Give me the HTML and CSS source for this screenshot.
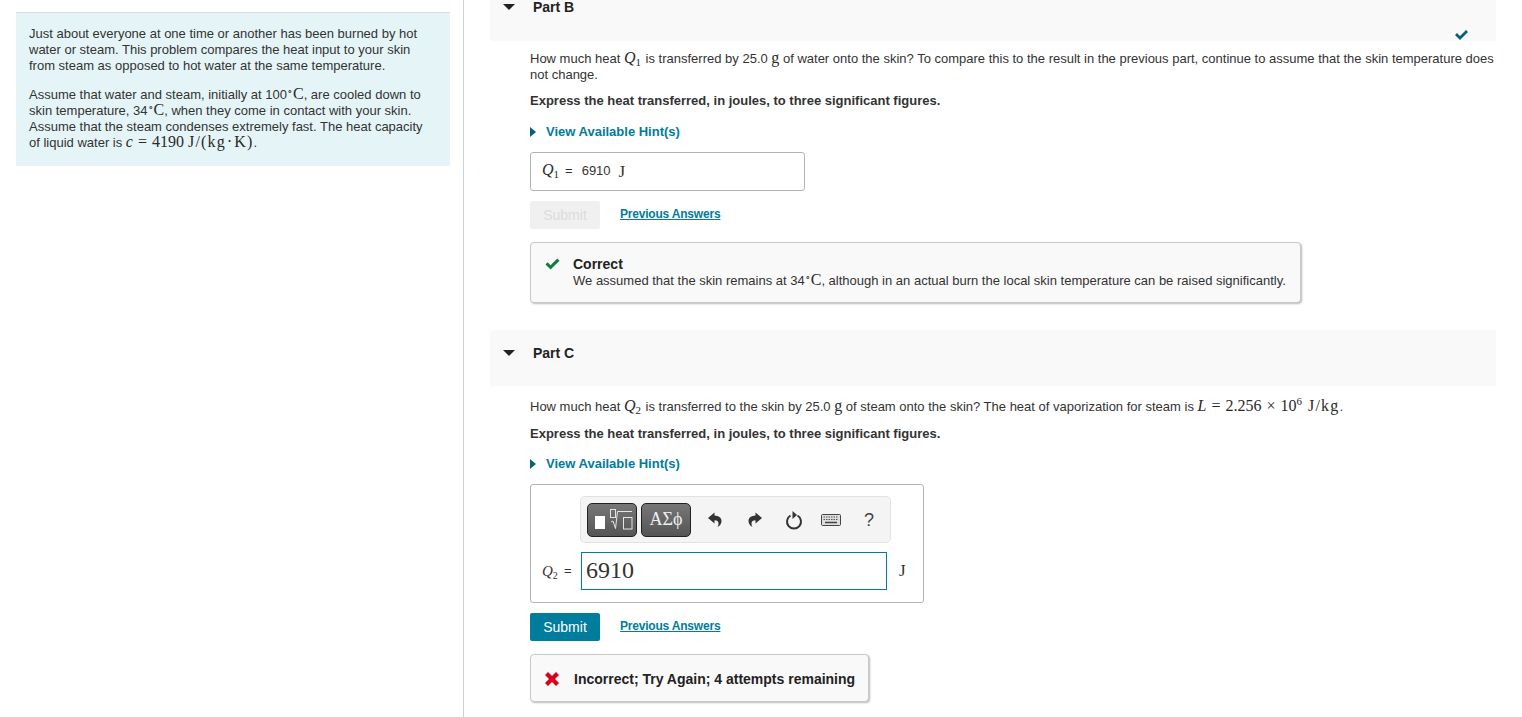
FILE: index.html
```html
<!DOCTYPE html>
<html lang="en">
<head>
<meta charset="utf-8">
<title>Part B and C</title>
<link rel="stylesheet" href="styles.css">
</head>
<body>
<main class="page">
  <aside class="left">
    <div class="intro">
      <p>Just about everyone at one time or another has been burned by hot water or steam. This problem compares the heat input to your skin from steam as opposed to hot water at the same temperature.</p>
      <p>Assume that water and steam, initially at 100<sup class="deg">∘</sup><span class="m big">C</span>, are cooled down to skin temperature, 34<sup class="deg">∘</sup><span class="m big">C</span>, when they come in contact with your skin. Assume that the steam condenses extremely fast. The heat capacity of liquid water is <span class="m big"><i>c</i><span class="op">=</span>4190 <span class="un">J/(kg<span class="dot">⋅</span>K)</span></span>.</p>
    </div>
  </aside>
  <section class="right">
    <header class="part-head part-b">
      <svg class="caret" width="12" height="6" viewBox="0 0 12 6"><path d="M0 0h12L6 6z"/></svg>
      <h2>Part B</h2>
      <svg class="done" width="14" height="11" viewBox="0 0 14 11"><path d="M1 6l2-2 3 3 6-6 2 2-8 8z"/></svg>
    </header>
    <div class="part-body b">
      <p class="q">How much heat <span class="m big"><i>Q</i><sub>1</sub></span> is transferred by 25.0 <span class="m big">g</span> of water onto the skin? To compare this to the result in the previous part, continue to assume that the skin temperature does not change.</p>
      <p class="ins">Express the heat transferred, in joules, to three significant figures.</p>
      <p class="hint"><svg width="6" height="10" viewBox="0 0 6 10"><path d="M0 0l6 5-6 5z"/></svg><a>View Available Hint(s)</a></p>
      <div class="answer-static">
        <span class="m big"><i>Q</i><sub>1</sub></span><span class="eq">=</span><span class="val">6910</span><span class="m unit">J</span>
      </div>
      <div class="actions">
        <button class="btn off">Submit</button><a class="prev">Previous Answers</a>
      </div>
      <div class="fb ok">
        <svg width="15" height="12" viewBox="0 0 15 12"><path d="M0.5 6.500l2.200-2.200 2.900 2.900L12.300 0.500l2.200 2.200-8.900 8.900z"/></svg>
        <div class="fb-text"><strong>Correct</strong><span>We assumed that the skin remains at 34<sup class="deg">∘</sup><span class="m big">C</span>, although in an actual burn the local skin temperature can be raised significantly.</span></div>
      </div>
    </div>
    <header class="part-head part-c">
      <svg class="caret" width="12" height="6" viewBox="0 0 12 6"><path d="M0 0h12L6 6z"/></svg>
      <h2>Part C</h2>
    </header>
    <div class="part-body c">
      <p class="q">How much heat <span class="m big"><i>Q</i><sub>2</sub></span> is transferred to the skin by 25.0 <span class="m big">g</span> of steam onto the skin? The heat of vaporization for steam is <span class="m big"><i>L</i><span class="op">=</span>2.256<span class="op">×</span>10<sup class="six">6</sup> <span class="un">J/kg</span></span>.</p>
      <p class="ins">Express the heat transferred, in joules, to three significant figures.</p>
      <p class="hint"><svg width="6" height="10" viewBox="0 0 6 10"><path d="M0 0l6 5-6 5z"/></svg><a>View Available Hint(s)</a></p>
      <div class="answer-edit">
        <div class="toolbar">
          <span class="tool dark">
            <svg width="48" height="32" viewBox="0 0 48 32" fill="none"><rect x="7" y="12" width="10" height="13" fill="#fff"/><rect x="22.500" y="5.500" width="5" height="8" stroke="#e4e4e4"/><path d="M23 18l2-1 2.500 7.500L29.500 7.500H44" stroke="#e4e4e4"/><rect x="35.500" y="13.500" width="8.500" height="11.500" stroke="#e4e4e4"/></svg>
          </span>
          <span class="tool dark greek">ΑΣϕ</span>
          <svg class="ti undo" width="16" height="18" viewBox="0 0 16 18"><path d="M7.500 1.500L1 7l6.500 5.500V9.200c2.500 0 4 1 4 3.300 0 1.500-.5 2.500-1 3.500 3-1.500 4-4 4-6 0-3.500-3-5.300-7-5.500z"/></svg>
          <svg class="ti redo" width="16" height="18" viewBox="0 0 16 18"><path d="M8.500 1.500L15 7l-6.500 5.500V9.200c-2.500 0-4 1-4 3.300 0 1.500.5 2.500 1 3.500-3-1.500-4-4-4-6 0-3.500 3-5.300 7-5.500z"/></svg>
          <svg class="ti-line reset" width="18" height="20" viewBox="0 0 18 20" fill="none"><path d="M5.500 5.500a7 7 0 1 0 7 0" stroke="#333" stroke-width="2"/><path d="M7.500 1v8l4.500-4z" fill="#333"/></svg>
          <svg class="ti-line kbd" width="20" height="12" viewBox="0 0 20 12"><rect x=".5" y=".5" width="19" height="11" rx="1" fill="#ddd" stroke="#444"/><path d="M2.500 3h15M2.500 5.500h15" stroke="#555" stroke-dasharray="1.500 1"/><path d="M4 8.500h12" stroke="#444" stroke-width="1.500"/></svg>
          <span class="help">?</span>
        </div>
        <div class="input-row">
          <span class="m label"><i>Q</i><sub>2</sub></span><span class="eq2">=</span>
          <span class="field">6910</span>
          <span class="m unit2">J</span>
        </div>
      </div>
      <div class="actions second">
        <button class="btn on">Submit</button><a class="prev">Previous Answers</a>
      </div>
      <div class="fb bad">
        <svg width="14" height="14" viewBox="0 0 14 14"><path d="M0 3l3-3 4 4 4-4 3 3-4 4 4 4-3 3-4-4-4 4-3-3 4-4z"/></svg>
        <strong>Incorrect; Try Again; 4 attempts remaining</strong>
      </div>
    </div>
  </section>
</main>
</body>
</html>
```
FILE: styles.css
```css
* { box-sizing: border-box; }
html, body { margin: 0; height: 717px; overflow: hidden; background: #fff; }
body { font-family: "Liberation Sans", Arial, sans-serif; font-size: 13px; line-height: 16px; color: #333; }
p { margin: 0; }
.page { display: flex; height: 717px; }
.left { width: 464px; flex: none; border-right: 1px solid #ccd1d9; padding: 12px 13px 0 16px; }
.intro { background: #e5f5f7; border-top: 1px solid #d9dfe2; height: 154px; padding: 13px 13px 0; }
.intro p + p { margin-top: 13px; }
.m { font-family: "Liberation Serif", serif; }
.big { font-size: 16px; line-height: 0; color: #2a2a2a; }
.op { margin: 0 5px; }
.dot { margin: 0 1px; }
.un { letter-spacing: 1.2px; }
.deg { font-size: 9px; line-height: 0; vertical-align: 4px; }
sub { font-size: 11px; line-height: 0; vertical-align: -3px; margin-right: 1px; }
.six { font-size: 11px; line-height: 0; vertical-align: 6px; margin-right: 2px; }
.right { flex: 1; padding: 0 26px; min-width: 0; }
.part-head { background: #f9f9f9; position: relative; display: flex; align-items: flex-start; padding-left: 13px; }
.part-b { height: 41px; padding-top: 4px; }
.part-c { height: 56px; margin-top: 27px; padding-top: 15px; }
.caret { fill: #222; flex: none; }
.part-c .caret { margin-top: 5px; }
h2 { margin: 0 0 0 18px; font-size: 14px; font-weight: 700; line-height: 16px; color: #222; }
.part-b h2 { margin-top: -5px; }
.done { fill: #0b5f79; position: absolute; right: 28px; top: 29px; }
.part-body { padding-left: 40px; }
.part-body.b { padding-top: 10px; }
.part-body.c { padding-top: 13px; }
.ins { font-weight: 700; margin-top: 10px; }
.c .ins { margin-top: 11px; }
.hint { margin-top: 15px; display: flex; align-items: center; gap: 10px; font-weight: 700; }
.c .hint { margin-top: 14px; }
.hint svg { fill: #0b5f79; flex: none; }
.hint a { color: #007c9c; }
.answer-static { margin-top: 12px; width: 275px; height: 39px; border: 1px solid #b3b3b3; border-radius: 3px; display: flex; align-items: center; padding-left: 11px; }
.eq { margin: -2px 9px 0 5px; }
.val { font-size: 13px; margin-top: -2px; }
.unit { font-size: 17px; margin-left: 8px; }
.actions { margin-top: 10px; display: flex; align-items: center; gap: 20px; }
.btn { width: 70px; height: 28px; border: 0; border-radius: 2px; font: 14px/28px "Liberation Sans", Arial, sans-serif; padding: 0; }
.btn.off { background: #f0f0f0; color: #dcdcdc; }
.btn.on { background: #007c9c; color: #fff; }
.prev { color: #007c9c; font-size: 12px; font-weight: 700; letter-spacing: -.2px; text-decoration: underline; position: relative; top: -1px; }
.fb { border: 1px solid #c8c8c8; border-radius: 4px; background: #f9f9f9; box-shadow: 1px 1px 2px #bbb; display: flex; }
.fb.ok { margin-top: 13px; width: 771px; height: 61px; padding: 13px 0 0 14px; gap: 13px; }
.fb.ok svg { fill: #107c41; margin-top: 2px; flex: none; }
.fb-text { display: flex; flex-direction: column; }
.fb-text strong { color: #222; font-size: 14px; line-height: 17px; }
.fb.bad { margin-top: 13px; width: 339px; height: 48px; align-items: center; padding: 1px 0 0 14px; gap: 15px; }
.fb.bad svg { fill: #d8001c; flex: none; }
.fb.bad strong { color: #222; font-size: 14px; }
.answer-edit { margin-top: 12px; width: 394px; height: 119px; border: 1px solid #b3b3b3; border-radius: 3px; padding: 11px 0 0 49px; }
.toolbar { width: 311px; height: 47px; background: #f4f4f4; border: 1px solid #e2e2e2; border-radius: 5px; display: flex; align-items: center; padding-left: 6px; }
.tool { width: 50px; height: 34px; border: 1px solid #222; border-radius: 5px; background: linear-gradient(#777, #555); display: flex; align-items: center; justify-content: center; margin-right: 4px; }
.greek { font: 18px "Liberation Serif", serif; color: #eee; }
.ti { fill: #333; flex: none; }
.ti-line { flex: none; }
.undo { margin-left: 12px; }
.redo { margin-left: 24px; }
.reset { margin-left: 22px; }
.kbd { margin-left: 18px; }
.help { margin-left: 23px; font-size: 18px; color: #444; }
.input-row { display: flex; align-items: center; margin: 9px 0 0 -38px; }
.label { font-size: 15px; width: 22px; }
.label sub { font-size: 10px; }
.eq2 { width: 17px; }
.field { width: 306px; height: 38px; border: 1px solid #007c9c; font: 24px/34px "Liberation Serif", serif; padding-left: 4px; color: #333; }
.unit2 { margin-left: 12px; font-size: 17px; }
```
